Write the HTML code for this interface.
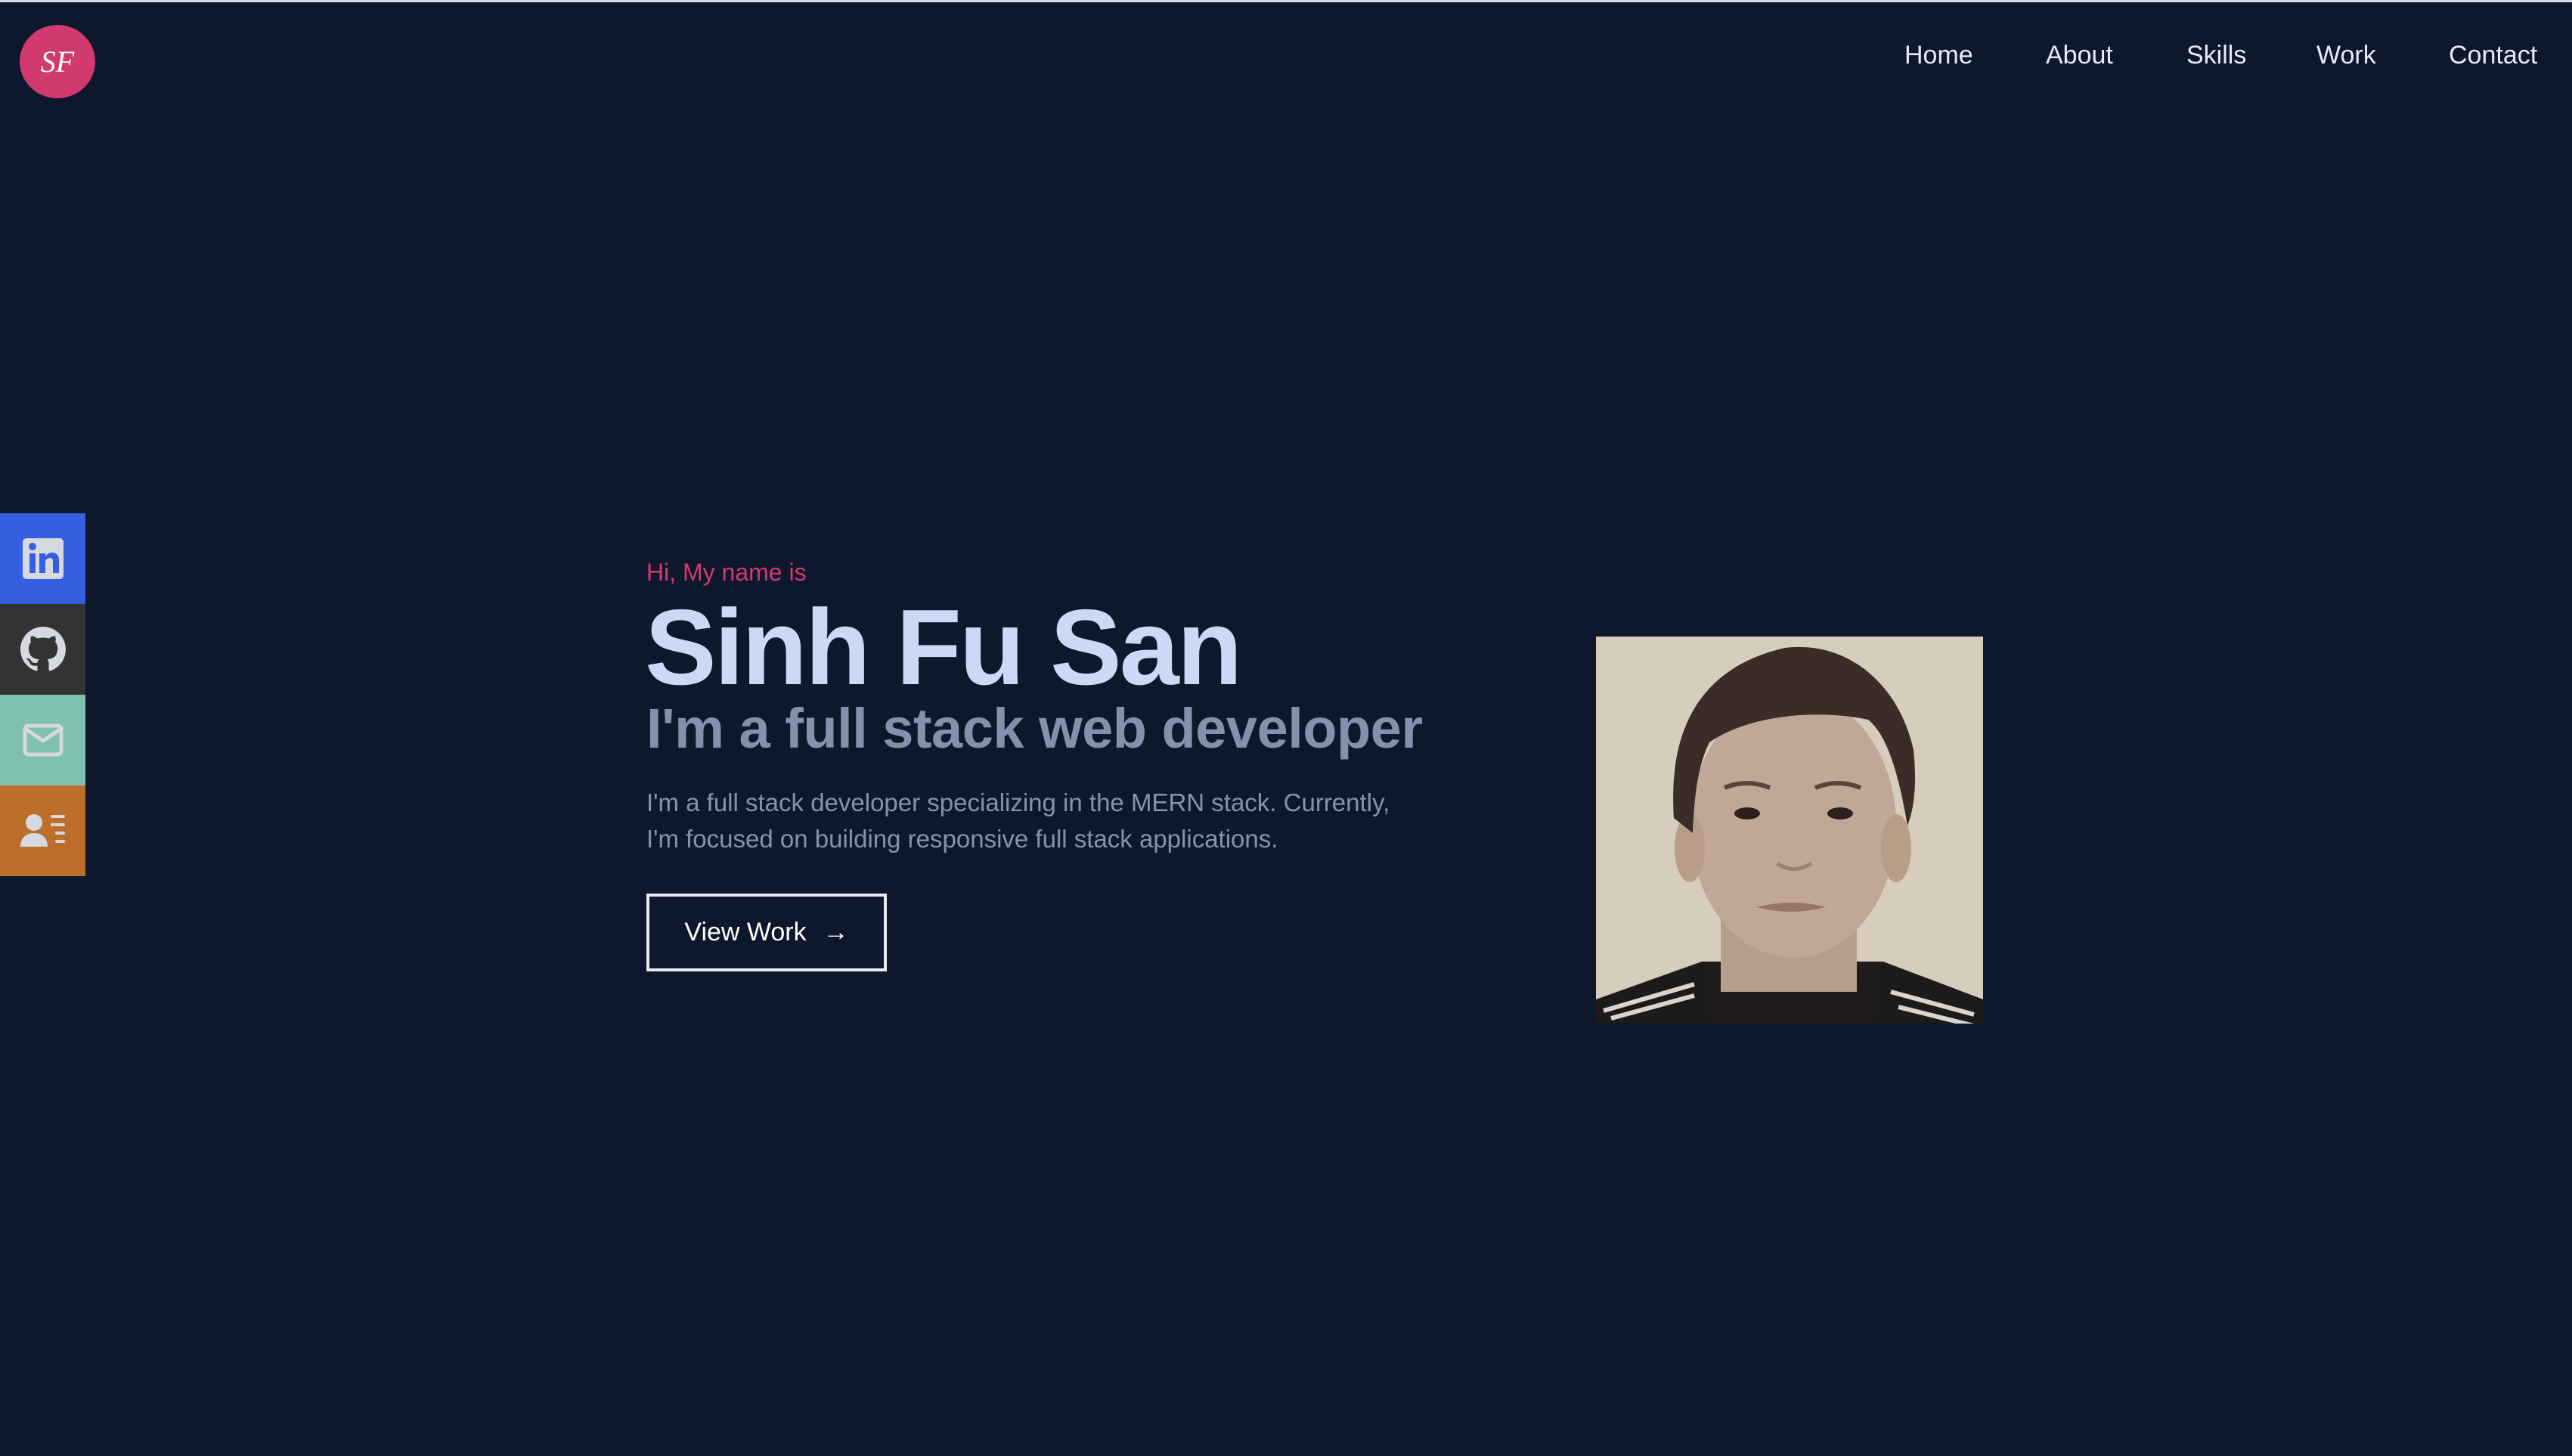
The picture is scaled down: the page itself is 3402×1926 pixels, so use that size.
<!DOCTYPE html>
<html><head><meta charset="utf-8"><style>
*{margin:0;padding:0;box-sizing:border-box}
body{width:3402px;height:1926px;background:#0e182c;position:relative;overflow:hidden;font-family:"Liberation Sans",sans-serif}
.topline{position:absolute;left:0;top:0;width:100%;height:3px;background:#d9dce2}
.logo{position:absolute;left:26px;top:33px;width:100px;height:97px;border-radius:50%;background:#d23a6f;color:#fff;font-family:"Liberation Serif",serif;font-style:italic;font-size:40px;text-align:center;line-height:97px}
.nav a{position:absolute;top:54px;color:#e6ebf5;font-size:34px;text-decoration:none}
.side div{position:absolute;left:0;width:113px;height:120px;display:flex;align-items:center;justify-content:center}
.hi{position:absolute;left:855px;top:739px;color:#d23a6f;font-size:32px}
.name{position:absolute;left:853px;top:777px;color:#cdd8f5;font-size:142px;font-weight:bold;letter-spacing:-3px;line-height:160px}
.sub{position:absolute;left:855px;top:919px;color:#8690ad;font-size:74px;font-weight:bold;letter-spacing:-0.5px;line-height:90px;white-space:nowrap}
.p{position:absolute;left:855px;top:1038px;color:#8892b0;font-size:33px;line-height:48px;width:1150px}
.btn{position:absolute;left:855px;top:1182px;width:318px;height:103px;border:4px solid #e8ebf0;color:#fff;font-size:34px;display:flex;align-items:center;justify-content:center;gap:22px}
.photo{position:absolute;left:2111px;top:842px;width:512px;height:512px}
</style></head><body>
<div class="topline"></div>
<div class="logo">SF</div>
<div class="nav"><a style="left:2519px">Home</a><a style="left:2706px">About</a><a style="left:2892px">Skills</a><a style="left:3064px">Work</a><a style="left:3239px">Contact</a></div>
<div class="side">
<div style="top:679px;background:#335fe0"><svg width="54" height="54" viewBox="0 0 54 54"><rect width="54" height="54" rx="5" fill="#d6d9e0"/><rect x="9" y="20" width="8" height="26" fill="#335fe0"/><circle cx="13" cy="11" r="5" fill="#335fe0"/><path d="M22 20h8v4c2-3 5-5 9-5 6 0 9 4 9 10v17h-8V31c0-3-1-5-4-5s-6 2-6 6v14h-8z" fill="#335fe0"/></svg></div>
<div style="top:799px;background:#333"><svg width="60" height="60" viewBox="0 0 16 16"><path fill="#d6d9e0" d="M8 0C3.580 0 0 3.58 0 8c0 3.54 2.29 6.53 5.47 7.59.4.07.55-.17.55-.38 0-.19-.01-.82-.01-1.490-2.01.37-2.53-.49-2.690-.94-.09-.23-.48-.94-.82-1.130-.28-.15-.68-.52-.01-.53.63-.01 1.080.58 1.230.82.72 1.210 1.870.87 2.330.66.07-.52.28-.87.51-1.070-1.780-.2-3.640-.89-3.640-3.950 0-.87.31-1.590.82-2.150-.08-.2-.36-1.020.08-2.120 0 0 .67-.21 2.2.82.64-.18 1.320-.27 2-.27.68 0 1.360.09 2 .27 1.530-1.040 2.2-.82 2.2-.82.44 1.1.16 1.920.08 2.120.51.56.82 1.270.82 2.150 0 3.070-1.870 3.750-3.650 3.950.29.25.54.73.54 1.480 0 1.070-.01 1.930-.01 2.2 0 .21.15.46.55.38A8.013 8.013 0 0016 8c0-4.420-3.580-8-8-8z"/></svg></div>
<div style="top:919px;background:#80c0b0"><svg width="54" height="44" viewBox="0 0 54 44"><rect x="3" y="3" width="48" height="38" rx="5" fill="none" stroke="#d6d9e0" stroke-width="5"/><path d="M5 8l22 15 22-15" fill="none" stroke="#d6d9e0" stroke-width="5"/></svg></div>
<div style="top:1039px;background:#bd6e2b"><svg width="64" height="50" viewBox="0 0 64 50"><circle cx="20" cy="14" r="11" fill="#d6d9e0"/><path d="M2 46c0-12 8-18 18-18s18 6 18 18z" fill="#d6d9e0"/><g stroke="#d6d9e0" stroke-width="4" stroke-linecap="round"><path d="M44 6h15M44 17h15M50 28h9M50 39h9"/></g></svg></div>
</div>
<div class="hi">Hi, My name is</div>
<div class="name">Sinh Fu San</div>
<div class="sub">I'm a full stack web developer</div>
<div class="p">I'm a full stack developer specializing in the MERN stack. Currently,<br>I'm focused on building responsive full stack applications.</div>
<div class="btn"><span>View Work</span><span>→</span></div>
<svg class="photo" viewBox="0 0 512 512">
<rect width="512" height="512" fill="#d6cdbd"/>
<path d="M0 512L0 480 140 430 380 430 512 480 512 512z" fill="#1d1a1c"/>
<path d="M150 430h220v82H150z" fill="#1f1b1c"/>
<path d="M10 495l120-35M20 505l110-30M390 470l110 30M400 490l100 25" stroke="#d8d4ce" stroke-width="6"/>
<rect x="165" y="330" width="180" height="140" fill="#b69f8a"/>
<ellipse cx="261" cy="250" rx="136" ry="175" fill="#c1a896"/>
<ellipse cx="124" cy="280" rx="20" ry="45" fill="#b89e89"/>
<ellipse cx="397" cy="280" rx="20" ry="45" fill="#b89e89"/>
<path d="M103 240C95 120 140 40 250 15 330 5 400 60 420 150 425 200 420 230 412 250 400 180 385 130 360 110 290 95 200 105 150 140 135 170 130 210 128 260z" fill="#3a2c26"/>
<path d="M170 200q30-12 60 0M290 200q30-12 60 0" stroke="#5a443a" stroke-width="6" fill="none"/>
<ellipse cx="200" cy="234" rx="17" ry="8" fill="#2c201c"/>
<ellipse cx="323" cy="234" rx="17" ry="8" fill="#2c201c"/>
<path d="M240 300q21 15 45 0" stroke="#9c8270" stroke-width="5" fill="none"/>
<path d="M212 358q48-12 92 0q-46 12-92 0z" fill="#9a7468"/>
</svg>
</body></html>
